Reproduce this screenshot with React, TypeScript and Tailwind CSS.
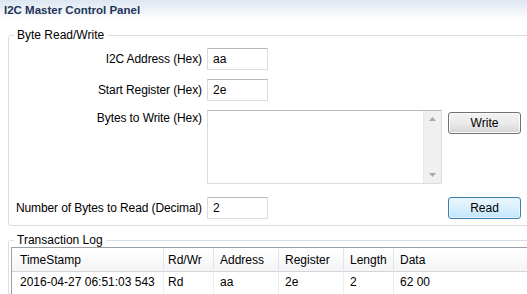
import React from 'react'

const columns = [
  { title: 'TimeStamp', value: '2016-04-27 06:51:03 543', pad: 'pl-[8px]' },
  { title: 'Rd/Wr', value: 'Rd', pad: 'pl-[4px]' },
  { title: 'Address', value: 'aa', pad: 'pl-[6px]' },
  { title: 'Register', value: '2e', pad: 'pl-[6px]' },
  { title: 'Length', value: '2', pad: 'pl-[6px]' },
  { title: 'Data', value: '62 00', pad: 'pl-[6px]' },
]

function TextBox({ value }: { value: string }) {
  return (
    <div className="h-[22px] w-[61px] border border-[#d9dde3] border-t-[#b6bac0] bg-white pl-[5px] leading-[20px]">
      {value}
    </div>
  )
}

function WinButton({ label, focused }: { label: string; focused?: boolean }) {
  return (
    <button
      type="button"
      className={
        focused
          ? 'h-[22px] w-[73px] rounded-[3px] border border-[#3c7fb1] bg-gradient-to-b from-[#eaf6fd] via-[#d9f0fc] to-[#bee6fd] text-[12px] leading-[20px] shadow-[inset_0_0_0_1px_#e6f4fc]'
          : 'h-[22px] w-[73px] rounded-[3px] border border-[#707070] bg-gradient-to-b from-[#f2f2f2] via-[#ebebeb] to-[#d4d4d4] text-[12px] leading-[20px] shadow-[inset_0_0_0_1px_#fbfbfb]'
      }
    >
      {label}
    </button>
  )
}

function Label({ text, top }: { text: string; top?: boolean }) {
  return (
    <div
      className={
        top
          ? 'w-[198px] pr-[5px] text-right leading-[16px] tracking-[-0.1px]'
          : 'w-[198px] pr-[5px] text-right leading-[22px] tracking-[-0.1px]'
      }
    >
      {text}
    </div>
  )
}

export default function App() {
  return (
    <div className="h-[294px] w-[527px] overflow-hidden bg-white text-[12px] text-black font-['Liberation_Sans',Arial,sans-serif]">
      <div className="h-[20px] bg-gradient-to-b from-[#dde6f0] to-white pl-[4px] pt-[3px] text-[11.5px] font-bold leading-[14px] text-[#1c3558]">
        I2C Master Control Panel
      </div>

      <fieldset className="ml-[8px] mt-[8px] w-[540px] rounded-[3px] border border-[#d5dfe5] pb-[6px] pt-[6px]">
        <legend className="ml-[5px] px-[3px] leading-[14px]">Byte Read/Write</legend>
        <div className="flex flex-col gap-[9px]">
          <div className="flex items-center">
            <Label text="I2C Address (Hex)" />
            <TextBox value="aa" />
          </div>
          <div className="flex items-center">
            <Label text="Start Register (Hex)" />
            <TextBox value="2e" />
          </div>
          <div className="flex items-start">
            <Label text="Bytes to Write (Hex)" top />
            <div className="flex h-[74px] w-[235px] border border-[#d9dde3] border-t-[#b6bac0] bg-white">
              <div className="flex-1" />
              <div className="flex w-[18px] flex-col items-center justify-between border-l border-[#e8e8e8] bg-[#f0f0f0] py-[6px]">
                <svg width="7" height="4" viewBox="0 0 7 4">
                  <path d="M0 4 L3.5 0 L7 4 Z" fill="#a8a8a8" />
                </svg>
                <svg width="7" height="4" viewBox="0 0 7 4">
                  <path d="M0 0 L3.5 4 L7 0 Z" fill="#a8a8a8" />
                </svg>
              </div>
            </div>
            <div className="ml-[6px] mt-[2px]">
              <WinButton label="Write" />
            </div>
          </div>
          <div className="mt-[4px] flex items-center">
            <Label text="Number of Bytes to Read (Decimal)" />
            <TextBox value="2" />
            <div className="ml-[180px]">
              <WinButton label="Read" focused />
            </div>
          </div>
        </div>
      </fieldset>

      <fieldset className="ml-[8px] mt-[7px] w-[540px] rounded-[3px] border border-[#d5dfe5]">
        <legend className="ml-[5px] px-[3px] leading-[14px]">Transaction Log</legend>
        <div className="ml-[2px] border-l border-t border-[#9ba0a6] bg-white">
          <div className="grid h-[24px] grid-cols-[152px_50px_65px_65px_50px_1fr] border-b border-[#d5d5d5] bg-gradient-to-b from-white to-[#f4f5f7]">
            {columns.map((c, i) => (
              <div
                key={c.title}
                className={`${c.pad} leading-[24px] ${i < columns.length - 1 ? 'border-r border-[#e2e4e7]' : ''}`}
              >
                {c.title}
              </div>
            ))}
          </div>
          <div className="grid h-[22px] grid-cols-[152px_50px_65px_65px_50px_1fr]">
            {columns.map((c, i) => (
              <div
                key={c.title}
                className={`${c.pad} leading-[20px] ${i < columns.length - 1 ? 'border-r border-[#eeeeee]' : ''}`}
              >
                {c.value}
              </div>
            ))}
          </div>
        </div>
      </fieldset>
    </div>
  )
}
